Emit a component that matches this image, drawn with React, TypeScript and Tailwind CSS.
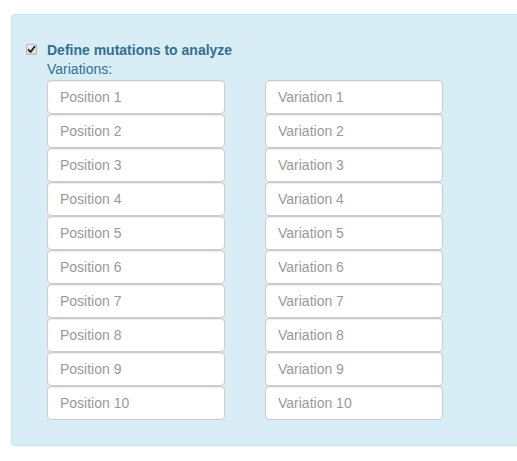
import React from "react";

const rows = Array.from({ length: 10 }, (_, i) => i + 1);

export default function App() {
  return (
    <div
      className="w-full h-[461px] overflow-hidden bg-white pl-[11px] pt-[14px]"
      style={{ fontFamily: '"Liberation Sans", Arial, Helvetica, sans-serif' }}
    >
      <div className="mr-[-10px] h-[432px] rounded-[4px] border border-[#bce8f1] bg-[#d9edf7] pl-[35px] pt-[24px]">
        <div className="relative flex items-center h-[20px] mt-[1px]">
          <span className="absolute left-[-21px] top-[4px] flex h-[11px] w-[11px] items-center justify-center rounded-[2px] border border-[#b5b5b5] bg-gradient-to-b from-[#f0f0f0] to-[#d6d6d6]">
            <svg width="9" height="9" viewBox="0 0 9 9">
              <path d="M1.5 4.8 L3.6 7 L7.6 1.6" fill="none" stroke="#222" strokeWidth="1.8" strokeLinecap="round" strokeLinejoin="round" />
            </svg>
          </span>
          <span className="text-[14px] leading-[20px] font-bold text-[#31708f]">Define mutations to analyze</span>
        </div>
        <div className="text-[14px] leading-[20px] text-[#31708f] mt-[-1px]">Variations:</div>
        <div className="mt-[1px] grid grid-cols-[178px_178px] gap-x-[40px]">
          {rows.map((n) => (
            <React.Fragment key={n}>
              <input
                type="text"
                placeholder={`Position ${n}`}
                className="h-[34px] w-[178px] rounded-[4px] border border-[#ccc] bg-white px-[12px] text-[14px] text-[#555] placeholder:text-[#999] shadow-[inset_0_1px_1px_rgba(0,0,0,0.075)] outline-none"
              />
              <input
                type="text"
                placeholder={`Variation ${n}`}
                className="h-[34px] w-[178px] rounded-[4px] border border-[#ccc] bg-white px-[12px] text-[14px] text-[#555] placeholder:text-[#999] shadow-[inset_0_1px_1px_rgba(0,0,0,0.075)] outline-none"
              />
            </React.Fragment>
          ))}
        </div>
      </div>
    </div>
  );
}
